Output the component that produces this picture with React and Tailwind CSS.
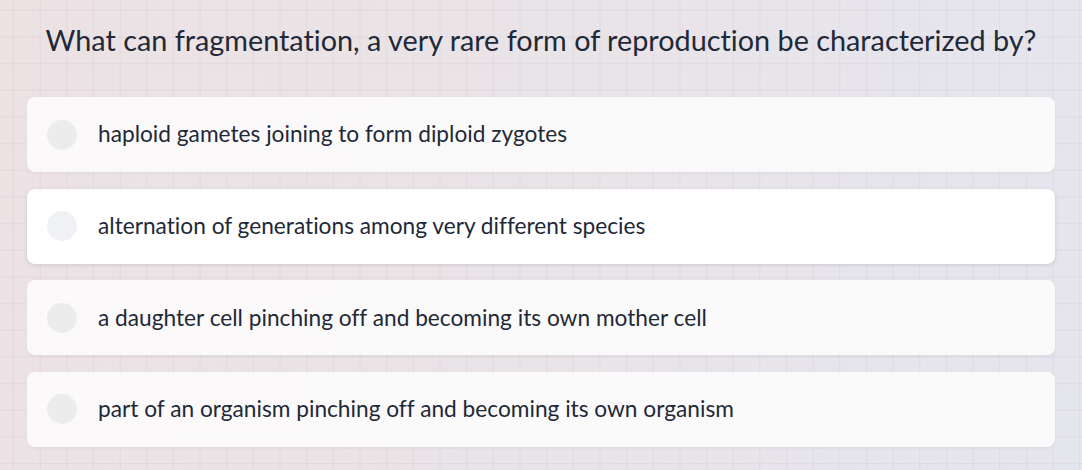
export default function App() {
  const options = [
    { text: "haploid gametes joining to form diploid zygotes", active: false },
    { text: "alternation of generations among very different species", active: true },
    { text: "a daughter cell pinching off and becoming its own mother cell", active: false },
    { text: "part of an organism pinching off and becoming its own organism", active: false },
  ];
  return (
    <div className="w-[1082px] h-[470px] overflow-hidden bg-[linear-gradient(100deg,#ece2e4_0%,#e9e4e8_50%,#e5e5ee_100%)]">
      <div
        className="w-full h-full [background-image:linear-gradient(to_right,rgba(120,100,110,0.07)_1px,transparent_1px),linear-gradient(to_bottom,rgba(120,100,110,0.07)_1px,transparent_1px)] [background-size:26.667px_26.667px] [background-position:13px_10px] font-['Lato','Liberation_Sans',sans-serif] [font-variant-ligatures:none]"
      >
        <div className="flex flex-col px-[27px] pt-[20px]">
          <h1 className="text-center text-[28.8px] leading-[40px] text-[#1f2937] font-normal whitespace-nowrap">
            What can fragmentation, a very rare form of reproduction be characterized by?
          </h1>
          <div className="mt-[37px] flex flex-col gap-[16.67px]">
            {options.map((o, i) => (
              <div
                key={i}
                className={
                  o.active
                    ? "h-[75px] rounded-[8px] bg-white shadow-[0_1px_4px_rgba(0,0,0,0.12)] flex items-center pl-[20px]"
                    : "h-[75px] rounded-[8px] bg-white/80 shadow-[0_1px_3px_rgba(0,0,0,0.06)] flex items-center pl-[20px]"
                }
              >
                <div
                  className={
                    o.active
                      ? "w-[30px] h-[30px] rounded-full bg-[#eff1f4] shrink-0"
                      : "w-[30px] h-[30px] rounded-full bg-[#ececec] shrink-0"
                  }
                />
                <span className="ml-[21px] text-[22.7px] text-[#1f2937]">{o.text}</span>
              </div>
            ))}
          </div>
        </div>
      </div>
    </div>
  );
}
